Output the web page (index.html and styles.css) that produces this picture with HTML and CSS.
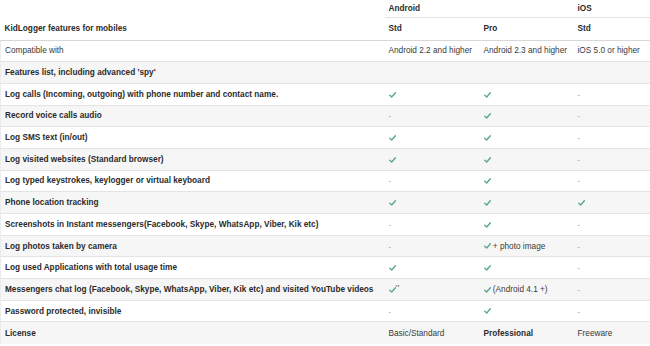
FILE: index.html
```html
<!DOCTYPE html>
<html>
<head>
<meta charset="utf-8">
<link rel="stylesheet" href="styles.css">
</head>
<body>
<table class="cmp">
  <colgroup>
    <col class="c-feat"><col class="c-std"><col class="c-pro"><col class="c-ios">
  </colgroup>
  <thead>
    <tr class="r-top">
      <th class="blank"></th>
      <th colspan="2" class="grp">Android</th>
      <th class="grp">iOS</th>
    </tr>
    <tr class="r-head">
      <th>KidLogger features for mobiles</th>
      <th>Std</th>
      <th>Pro</th>
      <th>Std</th>
    </tr>
  </thead>
  <tbody>
    <tr><td class="plain">Compatible with</td><td>Android 2.2 and higher</td><td>Android 2.3 and higher</td><td>iOS 5.0 or higher</td></tr>
    <tr class="alt"><td>Features list, including advanced 'spy'</td><td></td><td></td><td></td></tr>
    <tr><td>Log calls (Incoming, outgoing) with phone number and contact name.</td><td><span class="ck"></span></td><td><span class="ck"></span></td><td><span class="no">-</span></td></tr>
    <tr class="alt"><td>Record voice calls audio</td><td><span class="no">-</span></td><td><span class="ck"></span></td><td><span class="no">-</span></td></tr>
    <tr><td>Log SMS text (in/out)</td><td><span class="ck"></span></td><td><span class="ck"></span></td><td><span class="no">-</span></td></tr>
    <tr class="alt"><td>Log visited websites (Standard browser)</td><td><span class="ck"></span></td><td><span class="ck"></span></td><td><span class="no">-</span></td></tr>
    <tr><td>Log typed keystrokes, keylogger or virtual keyboard</td><td><span class="no">-</span></td><td><span class="ck"></span></td><td><span class="no">-</span></td></tr>
    <tr class="alt"><td>Phone location tracking</td><td><span class="ck"></span></td><td><span class="ck"></span></td><td><span class="ck"></span></td></tr>
    <tr><td>Screenshots in Instant messengers(Facebook, Skype, WhatsApp, Viber, Kik etc)</td><td><span class="no">-</span></td><td><span class="ck"></span></td><td><span class="no">-</span></td></tr>
    <tr class="alt"><td>Log photos taken by camera</td><td><span class="no">-</span></td><td><span class="ck"></span> + photo image</td><td><span class="no">-</span></td></tr>
    <tr><td>Log used Applications with total usage time</td><td><span class="ck"></span></td><td><span class="ck"></span></td><td><span class="no">-</span></td></tr>
    <tr class="alt"><td>Messengers chat log (Facebook, Skype, WhatsApp, Viber, Kik etc) and visited YouTube videos</td><td><span class="ck"></span><sup class="ast">**</sup></td><td><span class="ck"></span> (Android 4.1 +)</td><td><span class="no">-</span></td></tr>
    <tr><td>Password protected, invisible</td><td><span class="no">-</span></td><td><span class="ck"></span></td><td><span class="no">-</span></td></tr>
    <tr class="alt"><td>License</td><td class="lic">Basic/Standard</td><td class="lic strong">Professional</td><td class="lic">Freeware</td></tr>
  </tbody>
</table>
</body>
</html>
```
FILE: styles.css
```css
html, body {
  margin: 0;
  padding: 0;
  background: #ffffff;
}

.cmp {
  width: 650px;
  border-collapse: collapse;
  table-layout: fixed;
  font-family: "Liberation Sans", Arial, sans-serif;
  font-size: 8.25px;
  color: #333333;
}

.c-feat { width: 384px; }
.c-std { width: 95px; }
.c-pro { width: 94px; }
.c-ios { width: 77px; }

.cmp th,
.cmp td {
  padding: 0 4px;
  text-align: left;
  vertical-align: middle;
  white-space: nowrap;
  overflow: hidden;
}

.cmp th {
  font-weight: bold;
  color: #2b2b2b;
}

.r-top { height: 17px; }
.r-top th { padding-top: 0; }
.r-top .grp { border-bottom: 1px solid #e2e2e2; }

.r-head { height: 23px; }
.r-head th { border-bottom: 1px solid #d8d8d8; }

.cmp tbody tr { height: 21.7px; }
.cmp tbody td { border-top: 1px solid #e4e4e4; color: #3a3a3a; }
.cmp tbody td:first-child {
  font-weight: bold;
  color: #2b2b2b;
  border-left: 1px solid #ececec;
}
.cmp tbody td.plain { font-weight: normal; color: #3a3a3a; }

.cmp tbody tr.alt td { background: #f6f6f6; }

.ck {
  display: inline-block;
  width: 7px;
  height: 6px;
  vertical-align: middle;
  background: no-repeat center / 7px 6px;
  background-image: url("data:image/svg+xml;utf8,<svg xmlns='http://www.w3.org/2000/svg' viewBox='0 0 7 6'><path d='M0.8 3.3 L2.7 5 L6.4 0.8' fill='none' stroke='%235aa596' stroke-width='1.4' stroke-linecap='round' stroke-linejoin='round'/></svg>");
}

.no {
  color: #8a8a8a;
  font-size: 7px;
}

.ast {
  font-size: 5px;
  color: #555;
  vertical-align: 3px;
  margin-left: 0;
}

.lic { color: #3a3a3a; }
.lic.strong { font-weight: bold; color: #2b2b2b; }
```
